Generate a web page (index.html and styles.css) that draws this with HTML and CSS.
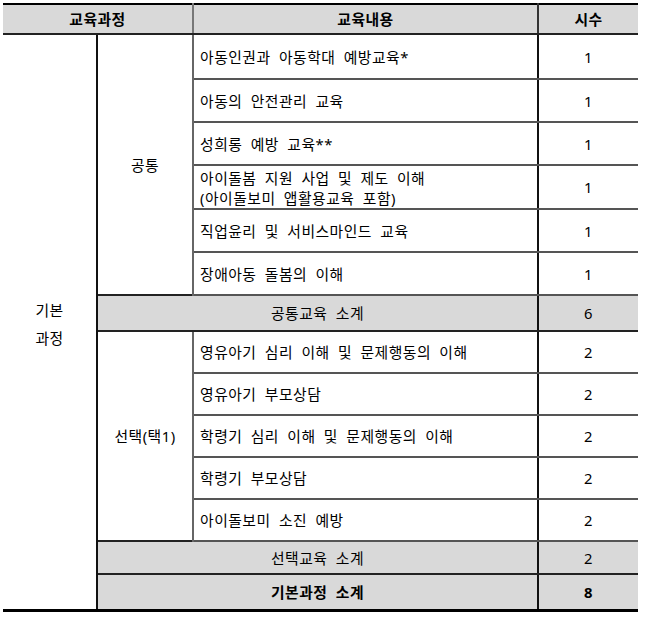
FILE: index.html
```html
<!DOCTYPE html>
<html lang="ko">
<head>
<meta charset="utf-8">
<link rel="stylesheet" href="styles.css">
</head>
<body>
<table class="course">
  <colgroup>
    <col class="c1"><col class="c2"><col class="c3"><col class="c4">
  </colgroup>
  <thead>
    <tr class="head">
      <th colspan="2">교육과정</th>
      <th class="content-h">교육내용</th>
      <th class="hours">시수</th>
    </tr>
  </thead>
  <tbody>
    <tr class="r45">
      <td rowspan="14" class="group">기본<br>과정</td>
      <td rowspan="6" class="sub">공통</td>
      <td class="item">아동인권과 아동학대 예방교육*</td>
      <td class="hours">1</td>
    </tr>
    <tr class="r43"><td class="item">아동의 안전관리 교육</td><td class="hours">1</td></tr>
    <tr class="r43"><td class="item">성희롱 예방 교육**</td><td class="hours">1</td></tr>
    <tr class="r44"><td class="item two">아이돌봄 지원 사업 및 제도 이해<br>(아이돌보미 앱활용교육 포함)</td><td class="hours">1</td></tr>
    <tr class="r43"><td class="item">직업윤리 및 서비스마인드 교육</td><td class="hours">1</td></tr>
    <tr class="r43"><td class="item">장애아동 돌봄의 이해</td><td class="hours">1</td></tr>
    <tr class="total r36"><td colspan="2">공통교육 소계</td><td class="hours">6</td></tr>
    <tr class="r42">
      <td rowspan="5" class="sub">선택(택1)</td>
      <td class="item">영유아기 심리 이해 및 문제행동의 이해</td>
      <td class="hours">2</td>
    </tr>
    <tr class="r42"><td class="item">영유아기 부모상담</td><td class="hours">2</td></tr>
    <tr class="r42"><td class="item">학령기 심리 이해 및 문제행동의 이해</td><td class="hours">2</td></tr>
    <tr class="r42"><td class="item">학령기 부모상담</td><td class="hours">2</td></tr>
    <tr class="r42"><td class="item">아이돌보미 소진 예방</td><td class="hours">2</td></tr>
    <tr class="total r33"><td colspan="2">선택교육 소계</td><td class="hours">2</td></tr>
    <tr class="total grand r36"><td colspan="2">기본과정 소계</td><td class="hours">8</td></tr>
  </tbody>
</table>
</body>
</html>
```

FILE: styles.css
```css
html, body {
  margin: 0;
  padding: 0;
  background: #fff;
}
body {
  padding: 3px 0 0 3px;
  font-family: "Noto Sans", "Noto Sans CJK KR", sans-serif;
  font-size: 14.8px;
  color: #000;
}
.course {
  border-collapse: collapse;
  table-layout: fixed;
  width: 635px;
  border-top: 2px solid #000;
  border-bottom: 3px solid #000;
}
.c1 { width: 94px; }
.c2 { width: 96px; }
.c3 { width: 345px; }
.c4 { width: 100px; }

th, td {
  padding: 0;
  text-align: center;
  vertical-align: middle;
  line-height: 18px;
  font-weight: normal;
  letter-spacing: 0.5px;
  word-spacing: 4px;
}
.head { height: 30px; background: #d9d9d9; }
.head th {
  font-weight: bold;
  border-bottom: 2px solid #222;
}
.head .content-h {
  border-left: 2px solid #777;
}
.head .hours {
  border-left: 2px solid #333;
}
.group {
  border-right: 2px solid #111;
  line-height: 28px;
  padding-top: 4px;
}
.sub {
  border-right: 2px solid #666;
}
.item {
  text-align: left;
  padding-left: 6px;
  border-bottom: 2px solid #555;
}
.item.two {
  line-height: 20px;
  padding-top: 2px;
}
.hours {
  border-left: 2px solid #111;
  border-bottom: 2px solid #555;
}
.total td {
  background: #d9d9d9;
  border-top: 2px solid #222;
  border-bottom: 2px solid #222;
}
.total + .total td {
  border-top: 2px solid #777;
}
.grand td {
  font-weight: bold;
  border-bottom: 3px solid #000;
}
.r45 { height: 45px; }
.r44 { height: 44px; }
.r43 { height: 43px; }
.r42 { height: 42px; }
.r36 { height: 36px; }
.r33 { height: 33px; }
```
